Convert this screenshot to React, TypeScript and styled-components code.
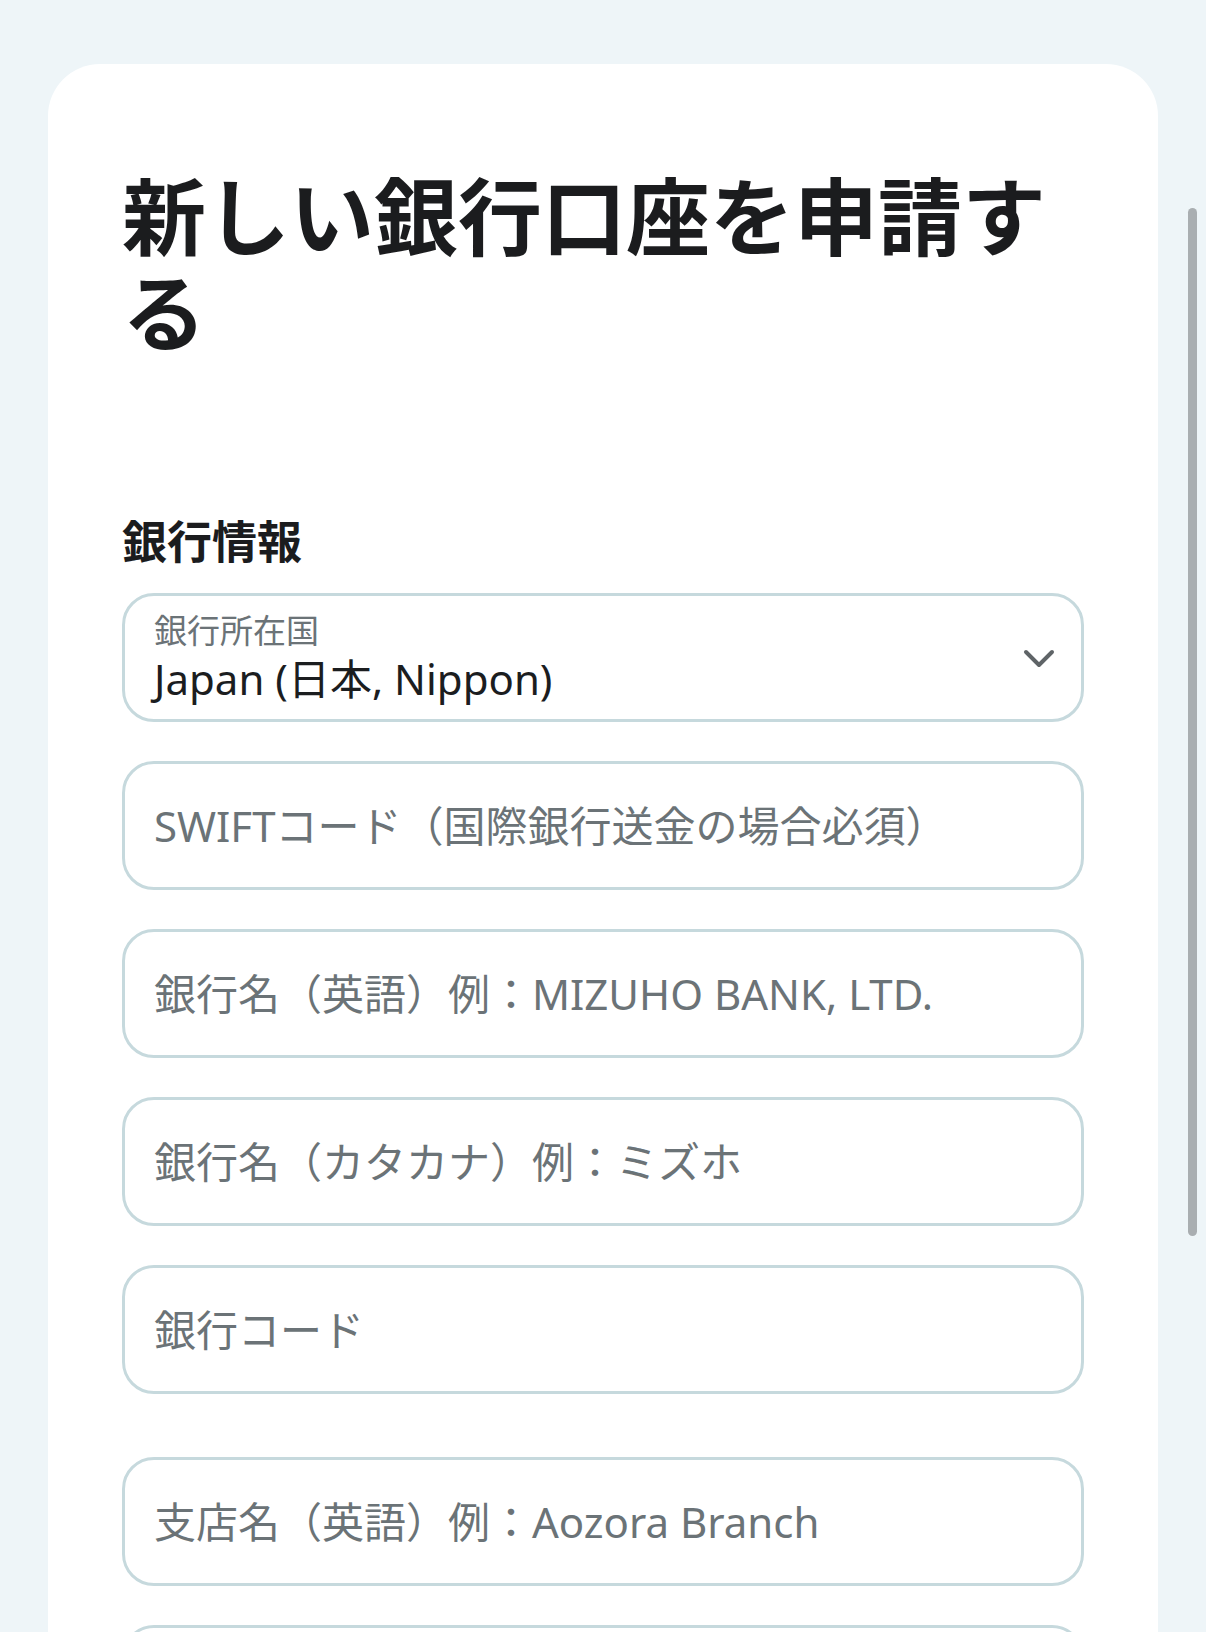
import React from 'react';
import styled, { createGlobalStyle } from 'styled-components';

const GlobalStyle = createGlobalStyle`
  html, body {
    margin: 0;
    padding: 0;
    overflow: hidden;
    background: #eef5f8;
  }
  body {
    font-family: "Noto Sans", "Noto Sans CJK JP", sans-serif;
    -webkit-font-smoothing: antialiased;
  }
  * { box-sizing: border-box; }
`;

const Page = styled.div`
  position: relative;
  height: 1632px;
  overflow: hidden;
  padding: 64px 48px 0;
`;

const Card = styled.main`
  background: #ffffff;
  border-radius: 52px 52px 0 0;
  padding: 101px 74px 80px;
`;

const Title = styled.h1`
  margin: 0;
  font-family: "Noto Sans CJK JP", sans-serif;
  font-size: 84px;
  line-height: 96px;
  font-weight: 700;
  color: #1b1c1e;
`;

const SectionTitle = styled.h2`
  margin: 154px 0 24px;
  font-family: "Noto Sans CJK JP", sans-serif;
  font-size: 45px;
  line-height: 58px;
  font-weight: 700;
  color: #1b1c1e;
`;

const Form = styled.form`
  display: flex;
  flex-direction: column;
  gap: 63px;
`;

const Group = styled.div`
  display: flex;
  flex-direction: column;
  gap: 39px;
`;

const SelectBox = styled.div`
  display: flex;
  align-items: center;
  height: 129px;
  padding: 0 25px 0 29px;
  border: 3px solid #c6d9dd;
  border-radius: 32px;
  background: #fff;
`;

const SelectText = styled.div`
  flex: 1;
  display: flex;
  flex-direction: column;
  gap: 2px;
`;

const FloatLabel = styled.span`
  font-size: 33px;
  line-height: 40px;
  color: #6b7377;
`;

const SelectValue = styled.span`
  font-size: 42px;
  line-height: 52px;
  color: #1b1d1f;
`;

const Chevron = styled.svg`
  width: 34px;
  height: 22px;
  flex: none;
`;

const Input = styled.input`
  display: block;
  width: 100%;
  height: 129px;
  padding: 0 28px 0 29px;
  border: 3px solid #c6d9dd;
  border-radius: 32px;
  background: #fff;
  outline: none;
  font-family: "Noto Sans", "Noto Sans CJK JP", sans-serif;
  font-size: 42px;
  color: #1b1d1f;

  &::placeholder {
    color: #6b7377;
    opacity: 1;
  }
`;

const ScrollThumb = styled.div`
  position: absolute;
  top: 208px;
  right: 9px;
  width: 9px;
  height: 1028px;
  border-radius: 5px;
  background: #a9aeb1;
`;

const bankFields = [
  'SWIFTコード（国際銀行送金の場合必須）',
  '銀行名（英語）例：MIZUHO BANK, LTD.',
  '銀行名（カタカナ）例：ミズホ',
  '銀行コード',
];

const branchFields = [
  '支店名（英語）例：Aozora Branch',
  '支店名（カタカナ）例：アオゾラ',
  '支店コード',
];

export default function App() {
  return (
    <>
      <GlobalStyle />
      <Page>
        <Card>
          <Title>新しい銀行口座を申請する</Title>
          <SectionTitle>銀行情報</SectionTitle>
          <Form onSubmit={(e) => e.preventDefault()}>
            <Group>
              <SelectBox>
                <SelectText>
                  <FloatLabel>銀行所在国</FloatLabel>
                  <SelectValue>Japan (日本, Nippon)</SelectValue>
                </SelectText>
                <Chevron viewBox="0 0 34 22">
                  <path
                    d="M4 5 L17 18 L30 5"
                    fill="none"
                    stroke="#5f6467"
                    strokeWidth="4"
                    strokeLinecap="round"
                    strokeLinejoin="round"
                  />
                </Chevron>
              </SelectBox>
              {bankFields.map((p) => (
                <Input key={p} placeholder={p} />
              ))}
            </Group>
            <Group>
              {branchFields.map((p) => (
                <Input key={p} placeholder={p} />
              ))}
            </Group>
          </Form>
        </Card>
        <ScrollThumb />
      </Page>
    </>
  );
}
